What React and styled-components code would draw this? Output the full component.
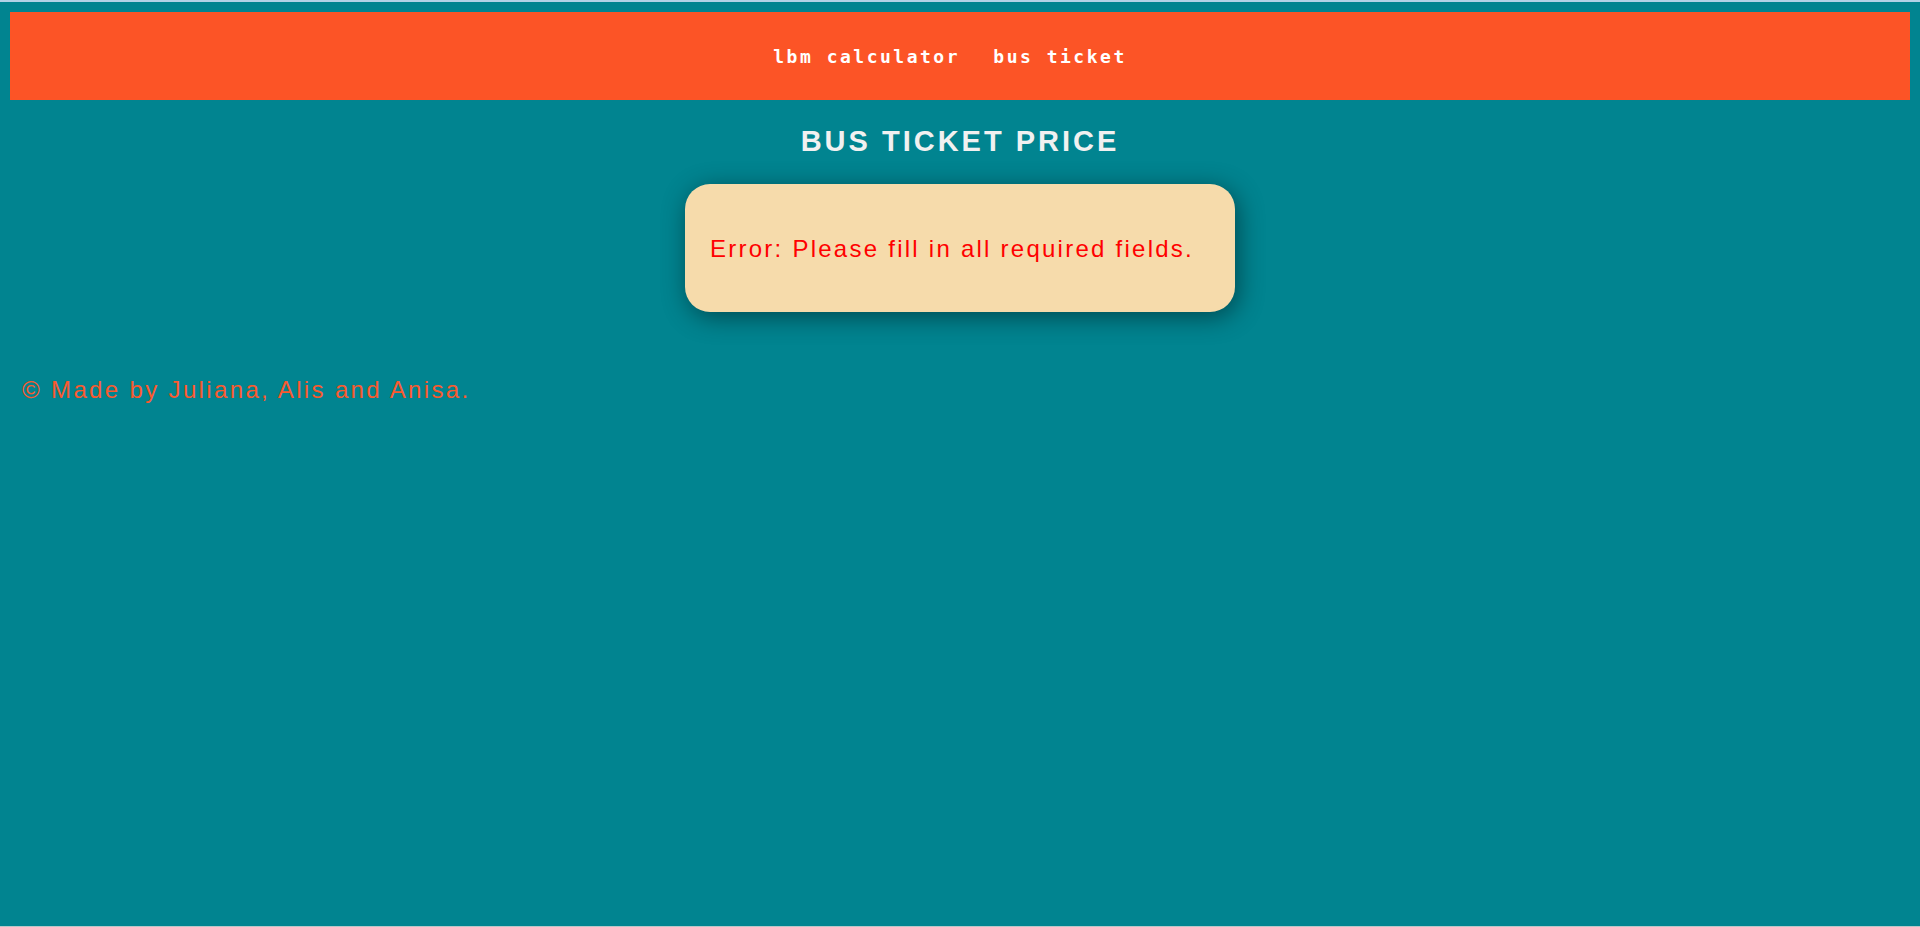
import React from "react";
import styled, { createGlobalStyle } from "styled-components";

const GlobalStyle = createGlobalStyle`
  html, body {
    margin: 0;
    padding: 0;
    background: #018490;
  }
  * { box-sizing: border-box; }
`;

const Page = styled.div`
  min-height: 927px;
  height: 927px;
  background: #018490;
  border-top: 2px solid #b3d2e6;
  border-bottom: 1px solid #b9c6c8;
  padding: 10px 10px 0;
  font-family: "Liberation Sans", Arial, sans-serif;
  overflow: hidden;
`;

const Header = styled.header`
  height: 88px;
  background: #fc5426;
  display: flex;
  align-items: center;
  justify-content: center;
`;

const Nav = styled.nav`
  font-family: "DejaVu Sans Mono", monospace;
  font-weight: bold;
  font-size: 18px;
  letter-spacing: 2.5px;
  white-space: pre;
  line-height: normal;
  padding-top: 1px;
`;

const NavLink = styled.a`
  color: #ffffff;
  text-decoration: none;
  margin-right: 20px;
`;

const Title = styled.h1`
  margin: 25px 0 26px;
  text-align: center;
  color: #f1f1f1;
  font-size: 29px;
  font-weight: bold;
  letter-spacing: 3px;
  line-height: normal;
`;

const Card = styled.div`
  width: 550px;
  height: 128px;
  margin: 0 auto;
  background: #f6dbab;
  border-radius: 25px;
  box-shadow: 3px 5px 26px rgba(0, 0, 0, 0.45);
  padding: 51px 25px 0;
`;

const ErrorText = styled.p`
  margin: 0;
  color: #ff0000;
  font-size: 24px;
  letter-spacing: 2.25px;
  line-height: normal;
`;

const Footer = styled.footer`
  margin-top: 64px;
  padding-left: 12px;
  color: #fa5a2e;
  font-size: 24px;
  letter-spacing: 2.35px;
  line-height: normal;
`;

export default function App() {
  return (
    <>
      <GlobalStyle />
      <Page>
        <Header>
          <Nav>
            <NavLink href="#">lbm calculator</NavLink> <NavLink href="#">bus ticket</NavLink>
          </Nav>
        </Header>
        <Title>BUS TICKET PRICE</Title>
        <Card>
          <ErrorText>Error: Please fill in all required fields.</ErrorText>
        </Card>
        <Footer>© Made by Juliana, Alis and Anisa.</Footer>
      </Page>
    </>
  );
}
